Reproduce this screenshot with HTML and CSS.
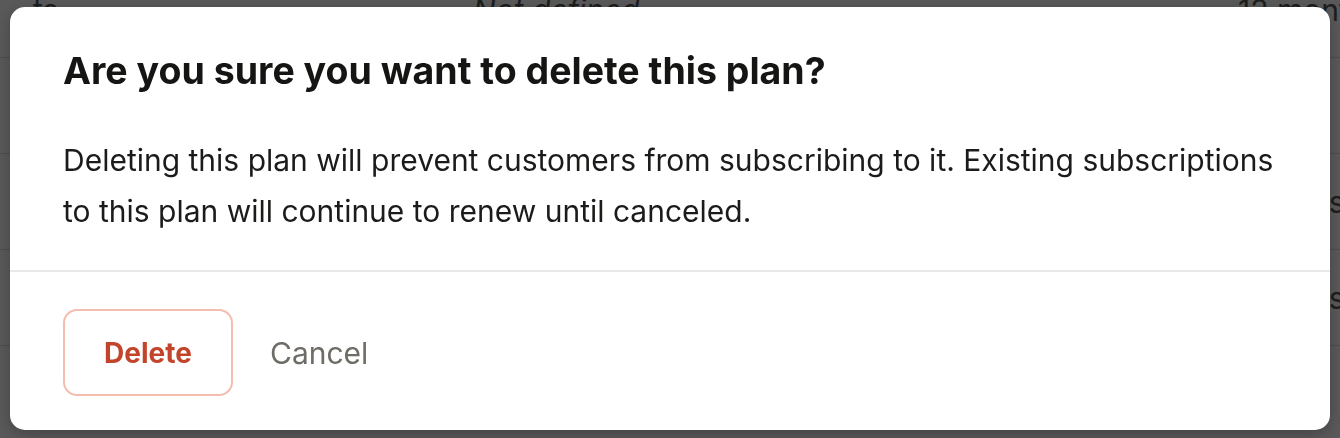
FILE: index.html
```html
<!DOCTYPE html>
<html lang="en">
<head>
    <meta charset="UTF-8">
    <title>Delete plan</title>
    <link rel="stylesheet" href="styles.css">
</head>
<body>
    <div class="page">
        <div class="plan-table">
            <div class="plan-row">
                <span class="cell">ts</span>
                <span class="cell cell-muted">Not defined</span>
                <span class="cell">12 months</span>
            </div>
            <div class="plan-row">
                <span class="cell"></span>
                <span class="cell"></span>
                <span class="cell"></span>
            </div>
            <div class="plan-row">
                <span class="cell"></span>
                <span class="cell"></span>
                <span class="cell">13 days</span>
            </div>
            <div class="plan-row">
                <span class="cell"></span>
                <span class="cell"></span>
                <span class="cell">13 days</span>
            </div>
            <div class="plan-row">
                <span class="cell"></span>
                <span class="cell"></span>
                <span class="cell"></span>
            </div>
        </div>
    </div>

    <div class="overlay"></div>

    <div class="modal">
        <div class="modal-body">
            <h2 class="modal-title">Are you sure you want to delete this plan?</h2>
            <p class="modal-text">Deleting this plan will prevent customers from subscribing to it. Existing subscriptions to this plan will continue to renew until canceled.</p>
        </div>
        <div class="modal-footer">
            <a class="btn-delete" href="javascript:;">Delete</a>
            <a class="btn-cancel" href="javascript:;">Cancel</a>
        </div>
    </div>
</body>
</html>
```
FILE: styles.css
```css
html,
body {
    margin: 0;
    height: 100%;
    overflow: hidden;
}
body {
    font-family: Inter, "Noto Sans", sans-serif;
    background: #fff;
}
.plan-table {
    margin-top: -38px;
}
.plan-row {
    display: grid;
    grid-template-columns: 440px 765px 1fr;
    align-items: center;
    height: 95px;
    padding-left: 33px;
    border-bottom: 1px solid #dcdcdc;
    font-size: 30px;
    color: #555;
    white-space: nowrap;
}
.cell-muted {
    font-style: italic;
}
.overlay {
    position: fixed;
    top: 0;
    right: 0;
    bottom: 0;
    left: 0;
    background: rgba(0, 0, 0, 0.65);
}
.modal {
    position: fixed;
    top: 7px;
    left: 10px;
    width: 1320px;
    background: #fff;
    border-radius: 15px;
    box-shadow: 0 4px 16px rgba(0, 0, 0, 0.25);
}
.modal-body {
    padding: 40px 40px 33px 53px;
}
.modal-title {
    margin: 0 0 40px;
    font-size: 37.5px;
    font-weight: 700;
    line-height: 48px;
    color: #151513;
}
.modal-text {
    margin: 0;
    font-size: 30px;
    line-height: 51px;
    color: #1b1b1a;
}
.modal-footer {
    display: flex;
    align-items: center;
    gap: 37px;
    padding: 37px 53px 34px;
    border-top: 2px solid #e8e8e8;
}
.btn-delete {
    display: flex;
    align-items: center;
    justify-content: center;
    box-sizing: border-box;
    width: 170px;
    height: 87px;
    border: 2px solid #f5bdb0;
    border-radius: 14px;
    font-size: 28px;
    font-weight: 700;
    color: #c2452b;
    text-decoration: none;
}
.btn-cancel {
    font-size: 30px;
    color: #6f6c67;
    text-decoration: none;
}
```
